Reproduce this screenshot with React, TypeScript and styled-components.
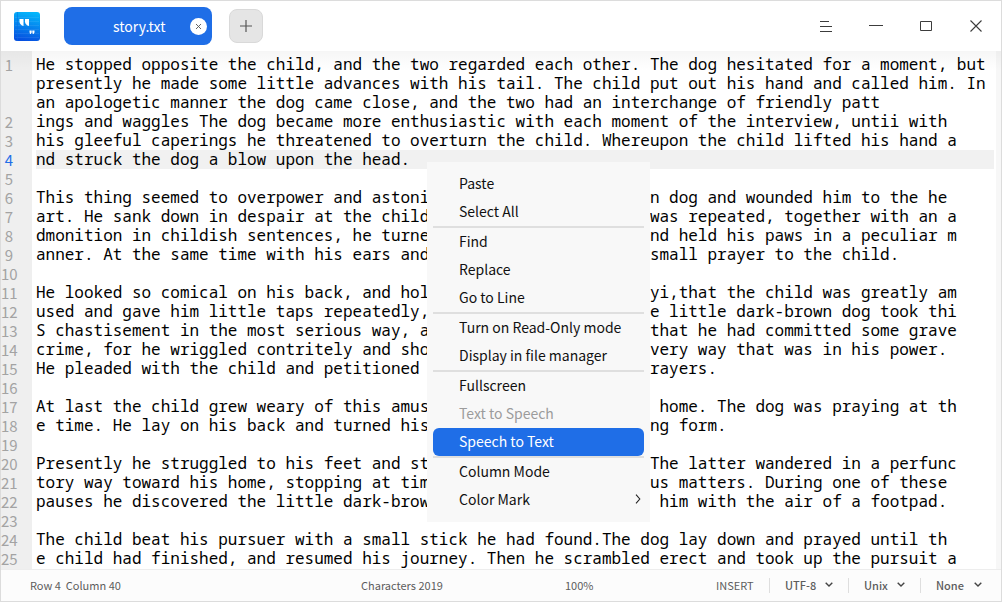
import React from "react";
import styled, { createGlobalStyle } from "styled-components";

const ui = `"Noto Sans CJK SC", "Noto Sans", sans-serif`;

const GlobalStyle = createGlobalStyle`
  * { box-sizing: border-box; }
  html, body { margin: 0; padding: 0; background: #fff; }
  body { font-family: ${ui}; overflow: hidden; }
  button { font: inherit; border: 0; padding: 0; background: none; color: inherit; }
`;

const Window = styled.div`
  position: relative;
  display: flex;
  flex-direction: column;
  width: 1002px;
  height: 602px;
  border: 1px solid #dcdcdc;
  background: #fff;
`;

const TitleBar = styled.header`
  display: flex;
  align-items: center;
  height: 50px;
  flex: none;
  padding: 0 13px;
`;

const Logo = styled.svg`
  display: block;
  margin-right: 24px;
`;

const Tab = styled.div`
  display: flex;
  align-items: center;
  width: 148px;
  height: 38px;
  padding: 0 5px 0 49px;
  border-radius: 8px;
  background: #1f6ee7;
  color: #fff;
  font-size: 14px;
`;

const TabName = styled.span`
  flex: 1;
  padding-bottom: 1px;
  white-space: nowrap;
`;

const CloseTab = styled.button`
  width: 17px;
  height: 17px;
  border-radius: 50%;
  background: #fff;
  display: flex;
  align-items: center;
  justify-content: center;
`;

const NewTab = styled.button`
  display: flex;
  align-items: center;
  justify-content: center;
  width: 34px;
  height: 34px;
  margin-left: 17px;
  border: 1px solid #d9d9d9;
  border-radius: 8px;
  background: #e5e5e5;
`;

const WindowButtons = styled.div`
  display: flex;
  margin-left: auto;
  margin-right: -13px;
`;

const WindowButton = styled.button`
  display: flex;
  align-items: center;
  justify-content: center;
  width: 50px;
  height: 50px;
`;

const Editor = styled.main`
  position: relative;
  display: flex;
  height: 518px;
  flex: none;
  overflow: hidden;
  &::before {
    content: "";
    position: absolute;
    inset: 0 0 auto;
    height: 20px;
    background: linear-gradient(rgba(0, 0, 0, 0.035), rgba(0, 0, 0, 0));
  }
`;

const Gutter = styled.div`
  width: 31px;
  padding-top: 4px;
  background: #efefef;
`;

const LineNumber = styled.div<{ $active?: boolean }>`
  width: 16px;
  height: 19px;
  line-height: 20px;
  font-size: 15px;
  text-align: center;
  color: ${(p) => (p.$active ? "#1f6ee7" : "#a3a3a3")};
`;

const Text = styled.div`
  flex: 1;
  padding: 4px 2px 0 4px;
`;

const Line = styled.div<{ $active?: boolean }>`
  height: 19px;
  line-height: 19px;
  font-family: "Noto Sans Mono", "DejaVu Sans Mono", monospace;
  font-size: 16px;
  letter-spacing: -0.008px;
  white-space: pre;
  color: #000;
  background: ${(p) => (p.$active ? "#f1f1f1" : "transparent")};
`;

const ScrollTrack = styled.div`
  width: 5px;
  background: #f7f7f7;
`;

const StatusBar = styled.footer`
  display: flex;
  align-items: center;
  flex: 1;
  padding-bottom: 1px;
  border-top: 1px solid #ededed;
  background: #fcfcfc;
  color: #5c5c5c;
  font-size: 11px;
`;

const Position = styled.span`
  width: 331px;
  padding-left: 29px;
  margin-right: 29px;
  white-space: pre;
`;

const Characters = styled.span`
  width: 204px;
`;

const Zoom = styled.span`
  width: 151px;
`;

const Mode = styled.span`
  width: 53px;
`;

const Choice = styled.div<{ $width: number }>`
  display: flex;
  align-items: center;
  justify-content: space-between;
  width: ${(p) => p.$width}px;
  height: 15px;
  padding: 0 15px;
  border-left: 1px solid #dedede;
  font-weight: 500;
`;

const Menu = styled.nav`
  position: absolute;
  left: 426px;
  top: 161px;
  width: 223px;
  padding: 8px 6px;
  background: #f8f8f8;
`;

const MenuItem = styled.div<{ $state?: "disabled" | "selected" }>`
  display: flex;
  align-items: center;
  justify-content: space-between;
  height: 28px;
  padding: 0 3px 2px 26px;
  border-radius: 6px;
  font-size: 14px;
  color: ${(p) => (p.$state === "disabled" ? "#9c9c9c" : p.$state === "selected" ? "#fff" : "#111")};
  background: ${(p) => (p.$state === "selected" ? "#1f6ee7" : "transparent")};
`;

const Separator = styled.div`
  height: 2px;
  background: #dfdfdf;
`;

const lines: [string, string][] = [
  ["1", "He stopped opposite the child, and the two regarded each other. The dog hesitated for a moment, but"],
  ["", "presently he made some little advances with his tail. The child put out his hand and called him. In"],
  ["", "an apologetic manner the dog came close, and the two had an interchange of friendly patt"],
  ["2", "ings and waggles The dog became more enthusiastic with each moment of the interview, untii with"],
  ["3", "his gleeful caperings he threatened to overturn the child. Whereupon the child lifted his hand a"],
  ["4", "nd struck the dog a blow upon the head."],
  ["5", ""],
  ["6", "This thing seemed to overpower and astonish the little dark-brown dog and wounded him to the he"],
  ["7", "art. He sank down in despair at the child's feet. When the blow was repeated, together with an a"],
  ["8", "dmonition in childish sentences, he turned over upon his back, and held his paws in a peculiar m"],
  ["9", "anner. At the same time with his ears and his eyes he offered a small prayer to the child."],
  ["10", ""],
  ["11", "He looked so comical on his back, and holding his paws peculiarlyi,that the child was greatly am"],
  ["12", "used and gave him little taps repeatedly, to keep him so. But the little dark-brown dog took thi"],
  ["13", "S chastisement in the most serious way, and no doubt considered that he had committed some grave"],
  ["14", "crime, for he wriggled contritely and showed his repentance in every way that was in his power."],
  ["15", "He pleaded with the child and petitioned him, and offered more prayers."],
  ["16", ""],
  ["17", "At last the child grew weary of this amusement and turned toward home. The dog was praying at th"],
  ["18", "e time. He lay on his back and turned his eyes upon the retreating form."],
  ["19", ""],
  ["20", "Presently he struggled to his feet and started after the child. The latter wandered in a perfunc"],
  ["21", "tory way toward his home, stopping at times to investigate various matters. During one of these"],
  ["22", "pauses he discovered the little dark-brown dog who was following him with the air of a footpad."],
  ["23", ""],
  ["24", "The child beat his pursuer with a small stick he had found.The dog lay down and prayed until th"],
  ["25", "e child had finished, and resumed his journey. Then he scrambled erect and took up the pursuit a"],
];

const menuGroups = [
  ["Paste", "Select All"],
  ["Find", "Replace", "Go to Line"],
  ["Turn on Read-Only mode", "Display in file manager"],
  ["Fullscreen", "Text to Speech", "Speech to Text"],
  ["Column Mode", "Color Mark"],
];

const itemState = (label: string) =>
  label === "Text to Speech" ? "disabled" : label === "Speech to Text" ? "selected" : undefined;

const Glyph = ({ d, size = 16, color = "#3c3c3c", width = 1 }: { d: string; size?: number; color?: string; width?: number }) => (
  <svg width={size} height={size} viewBox={`0 0 ${size} ${size}`} fill="none" stroke={color} strokeWidth={width}>
    <path d={d} />
  </svg>
);

const Chevron = () => (
  <svg width="8" height="6" viewBox="0 0 8 6" fill="none" stroke="#444" strokeWidth="1.4">
    <path d="M.7 .8 4 4.1 7.3 .8" />
  </svg>
);

const AppLogo = () => (
  <Logo width="26" height="29" viewBox="0 0 26 29">
    <defs>
      <linearGradient id="cover" x1="0.6" y1="0" x2="0.4" y2="1">
        <stop offset="0" stopColor="#04b6fb" />
        <stop offset="1" stopColor="#064fe0" />
      </linearGradient>
    </defs>
    <rect width="26" height="29" rx="3" fill="url(#cover)" />
    <path d="M1 5.5h24M1 9.5h24M1 13.5h24M1 17.5h24M1 21.5h24M1 25.5h24" stroke="#fff" strokeOpacity=".08" />
    <path d="M3.5 0v29" stroke="#036fe0" strokeOpacity=".5" />
    <path d="M5.5 7h4v7q-3.4-1-4-4zM11 7h4v7q-3.4-1-4-4zM15.5 18.5h2.2v2l-1 1.5h-1l.4-1.3h-.6zM18.3 18.5h2.2v2l-1 1.5h-1l.4-1.3h-.6z" fill="#fff" />
  </Logo>
);

export default function App() {
  return (
    <>
      <GlobalStyle />
      <Window>
        <TitleBar>
          <AppLogo />
          <Tab>
            <TabName>story.txt</TabName>
            <CloseTab aria-label="Close tab">
              <Glyph size={7} d="M1 1l5 5M6 1l-5 5" color="#555" width={0.9} />
            </CloseTab>
          </Tab>
          <NewTab aria-label="New tab">
            <Glyph size={12} d="M6 0v12M0 6h12" color="#555" width={1.2} />
          </NewTab>
          <WindowButtons>
            <WindowButton aria-label="Menu"><Glyph d="M2 3.5h9M2 8.5h12M2 13.5h12" /></WindowButton>
            <WindowButton aria-label="Minimize"><Glyph d="M1 7.5h14" /></WindowButton>
            <WindowButton aria-label="Maximize"><Glyph d="M2.5 3.5h11v9h-11z" /></WindowButton>
            <WindowButton aria-label="Close"><Glyph d="M2.5 2.5l11 11M13.5 2.5l-11 11" width={1.1} /></WindowButton>
          </WindowButtons>
        </TitleBar>
        <Editor>
          <Gutter>
            {lines.map(([n], i) => <LineNumber key={i} $active={n === "4"}>{n}</LineNumber>)}
          </Gutter>
          <Text>
            {lines.map(([n, text], i) => <Line key={i} $active={n === "4"}>{text}</Line>)}
          </Text>
          <ScrollTrack />
        </Editor>
        <StatusBar>
          <Position>{"Row 4  Column 40"}</Position>
          <Characters>Characters 2019</Characters>
          <Zoom>100%</Zoom>
          <Mode>INSERT</Mode>
          <Choice $width={79}>UTF-8<Chevron /></Choice>
          <Choice $width={72}>Unix<Chevron /></Choice>
          <Choice $width={77}>None<Chevron /></Choice>
        </StatusBar>
        <Menu>
          {menuGroups.map((group, i) => (
            <React.Fragment key={i}>
              {i > 0 && <Separator />}
              {group.map((label) => (
                <MenuItem key={label} $state={itemState(label)}>
                  {label}
                  {label === "Color Mark" && (
                    <svg width="6" height="10" viewBox="0 0 6 10" fill="none" stroke="#222" strokeWidth="1.1">
                      <path d="M1 .7 4.8 5 1 9.3" />
                    </svg>
                  )}
                </MenuItem>
              ))}
            </React.Fragment>
          ))}
        </Menu>
      </Window>
    </>
  );
}
